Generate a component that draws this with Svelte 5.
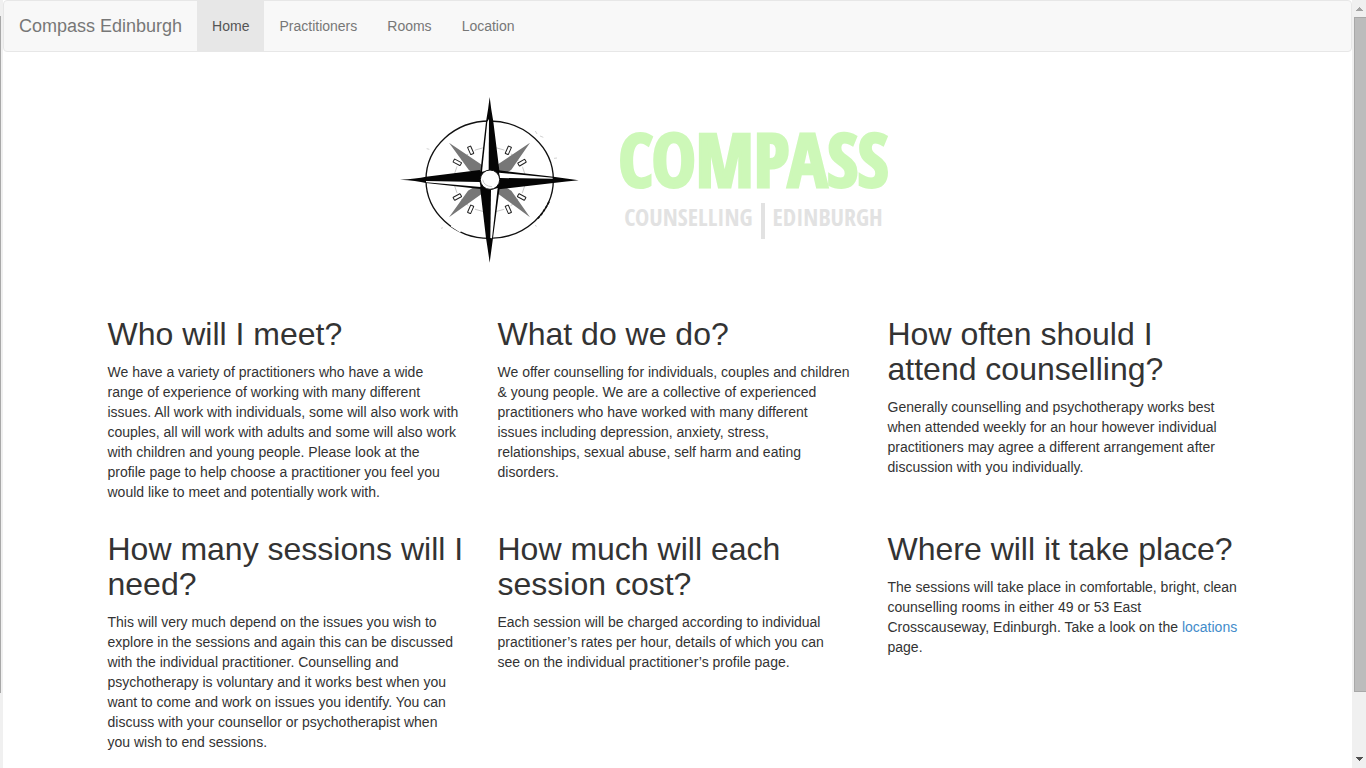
<script>
  const links = ['Home', 'Practitioners', 'Rooms', 'Location'];
  const topics = [
    {
      title: 'Who will I meet?',
      lines: [
        'We have a variety of practitioners who have a wide',
        'range of experience of working with many different',
        'issues. All work with individuals, some will also work with',
        'couples, all will work with adults and some will also work',
        'with children and young people. Please look at the',
        'profile page to help choose a practitioner you feel you',
        'would like to meet and potentially work with.'
      ]
    },
    {
      title: 'What do we do?',
      lines: [
        'We offer counselling for individuals, couples and children',
        '& young people. We are a collective of experienced',
        'practitioners who have worked with many different',
        'issues including depression, anxiety, stress,',
        'relationships, sexual abuse, self harm and eating',
        'disorders.'
      ]
    },
    {
      title: 'How often should I attend counselling?',
      lines: [
        'Generally counselling and psychotherapy works best',
        'when attended weekly for an hour however individual',
        'practitioners may agree a different arrangement after',
        'discussion with you individually.'
      ]
    },
    {
      title: 'How many sessions will I need?',
      lines: [
        'This will very much depend on the issues you wish to',
        'explore in the sessions and again this can be discussed',
        'with the individual practitioner. Counselling and',
        'psychotherapy is voluntary and it works best when you',
        'want to come and work on issues you identify. You can',
        'discuss with your counsellor or psychotherapist when',
        'you wish to end sessions.'
      ]
    },
    {
      title: 'How much will each session cost?',
      lines: [
        'Each session will be charged according to individual',
        'practitioner’s rates per hour, details of which you can',
        'see on the individual practitioner’s profile page.'
      ]
    },
    {
      title: 'Where will it take place?',
      lines: [
        'The sessions will take place in comfortable, bright, clean',
        'counselling rooms in either 49 or 53 East',
        'Crosscauseway, Edinburgh. Take a look on the '
      ],
      link: 'locations',
      after: 'page.'
    }
  ];
  const ticks = [
    [242, 196, -24], [355, 196, 24], [202, 232, -62], [396, 233, 60],
    [202, 336, 62], [395, 336, -62], [242, 373, 24], [355, 373, -24]
  ];
</script>

<div class="window">
  <div class="edge" aria-hidden="true"><div class="edge-thumb"></div></div>

  <div class="page">
    <nav class="navbar">
      <a class="brand" href="#home">Compass Edinburgh</a>
      <ul>
        {#each links as name, i}
          <li><a class:active={i === 0} href={'#' + name.toLowerCase()}>{name}</a></li>
        {/each}
      </ul>
    </nav>

    <main class="container">
      <header class="logo">
        <svg class="compass" viewBox="30 30 540 510" aria-hidden="true">
          <ellipse cx="299" cy="284" rx="191" ry="176" fill="none" stroke="#111" stroke-width="4" />
          <path d="M142 176Q162 150 188 133" fill="none" stroke="#fff" stroke-width="2" />
          <path d="M184 422L212 440" stroke="#fff" stroke-width="6" />
          <path d="M477 350Q463 379 444 400" fill="none" stroke="#111" stroke-width="5" stroke-dasharray="9 4" />
          <ellipse cx="299" cy="284" rx="107" ry="97" fill="none" stroke="#aaa" stroke-width="2" />
          <g fill="#fff" stroke="#222" stroke-width="3">
            {#each ticks as [x, y, turn]}
              <g transform={`translate(${x} ${y}) rotate(${turn})`}>
                <rect x="-11" y="-16" width="22" height="32" stroke="none" />
                <rect x="-5" y="-12" width="10" height="24" rx="1" />
              </g>
            {/each}
          </g>
          <path d="M177 173L284 245V275H262L236 254ZM420 173L316 243V275H334L364 254ZM177 397L234 317L262 300H284V320ZM420 397L364 317L336 300H316V320Z" fill="#777" />
          <path d="M299 36Q303 72 310 110L329 264L316 277L284 275L271 262L288 110Q295 72 299 36Z" fill="#050505" />
          <path d="M292 110L297 102L296 256L276 260Z" fill="#fff" />
          <path d="M30 284Q80 281 108 275L269 255L283 276L282 297L271 312L108 294Q80 286 30 284Z" fill="#050505" />
          <path d="M108 288L269 291L272 306L108 292Z" fill="#fff" />
          <path d="M566 286Q528 280 490 275L326 256L314 275L316 299L326 313L490 294Q530 290 566 286Z" fill="#050505" />
          <path d="M488 278L327 263L330 279L488 281Z" fill="#fff" />
          <path d="M299 533Q294 496 288 459L270 306L286 294L315 295L329 308L309 459Q304 496 299 533Z" fill="#050505" />
          <path d="M303 315L323 309L306 460L301 459Z" fill="#fff" />
          <circle cx="300" cy="284" r="29" fill="#fff" stroke="#111" stroke-width="3" />
          <path d="M278 284Q282 304 306 305" fill="none" stroke="#ccc" stroke-width="3" />
          <path d="M110 191l8 2M436 138l5 9M450 153l10 4M492 220l9-1M153 430l6-2M435 421l5 3" stroke="#bbb" stroke-width="2" />
        </svg>
        <div class="wordmark">
          <h1>COMPASS</h1>
          <p><span>COUNSELLING</span><i></i><span>EDINBURGH</span></p>
        </div>
      </header>

      <div class="topics">
        {#each topics as topic}
          <section>
            <h2>{topic.title}</h2>
            <p>
              {#each topic.lines as line, i}{#if i > 0}<br />{/if}{line}{/each}{#if topic.link}<a href="#location">{topic.link}</a><br />{topic.after}{/if}
            </p>
          </section>
        {/each}
      </div>
    </main>
  </div>

  <div class="scrollbar" aria-hidden="true">
    <svg viewBox="0 0 14 17"><path d="M4 11h7v-1h-1v-1h-1v-1h-1v-1h-1v1h-1v1h-1v1h-1z" fill="#a3a3a3" /></svg>
    <div class="track"><div class="thumb"></div></div>
    <svg viewBox="0 0 14 17"><path d="M4 6h7v1h-1v1h-1v1h-1v1h-1v-1h-1v-1h-1v-1h-1z" fill="#505050" /></svg>
  </div>
</div>

<style>
  :global(body) { margin: 0; background: #fff; }
  .window {
    display: grid;
    grid-template-columns: 3px minmax(0, 1fr) 14px;
    height: 100vh;
    overflow: hidden;
    color: #333;
    font: 14px/20px "Liberation Sans", Arial, sans-serif;
  }
  .edge { background: #f0f0f0; padding-top: 16px; }
  .edge-thumb { width: 1px; height: 90%; background: #a8a8a8; }
  .page { overflow: hidden; }
  .navbar {
    display: flex;
    background: #f8f8f8;
    border: 1px solid #e7e7e7;
    border-radius: 4px;
  }
  .navbar ul { display: flex; margin: 0; padding: 0; list-style: none; }
  .navbar a { display: block; padding: 15px; color: #777; text-decoration: none; }
  .navbar .brand { font-size: 18px; }
  .navbar .active { background: #e7e7e7; color: #555; }
  .container { max-width: 1170px; margin: 0 auto; }
  .logo {
    display: flex;
    justify-content: center;
    align-items: center;
    gap: 40px;
    padding: 43px 68px 32px 0;
  }
  .compass { width: 180px; height: 170px; }
  .wordmark {
    width: 267px;
    font-family: "Open Sans Condensed", "Liberation Sans Narrow", "Liberation Sans", sans-serif;
    font-weight: 700;
    white-space: nowrap;
  }
  .wordmark h1 {
    display: flex;
    justify-content: center;
    margin: 0 0 6px;
    font-size: 74px;
    line-height: 76px;
    color: #cdf8b8;
    -webkit-text-stroke: 3px #cdf8b8;
  }
  .wordmark p {
    display: flex;
    justify-content: center;
    gap: 8px;
    margin: 0;
    font-size: 24px;
    line-height: 28px;
    color: #e2e2e2;
  }
  .wordmark i { width: 4px; height: 36px; background: #e2e2e2; }
  .topics { display: grid; grid-template-columns: repeat(3, minmax(0, 1fr)); }
  section { padding: 0 15px; }
  h2 { margin: 20px 0 10px; font-size: 32px; line-height: 35px; font-weight: 500; }
  section p { margin: 0 0 10px; }
  section a { color: #428bca; text-decoration: none; }
  .scrollbar { display: flex; flex-direction: column; background: #f0f0f0; }
  .scrollbar svg { flex: none; width: 14px; height: 17px; }
  .track { flex: 1; padding-left: 2px; }
  .thumb { box-sizing: border-box; height: 92%; background: #bcbcbc; border: 1px solid #a8a8a8; border-right: 0; }
</style>
